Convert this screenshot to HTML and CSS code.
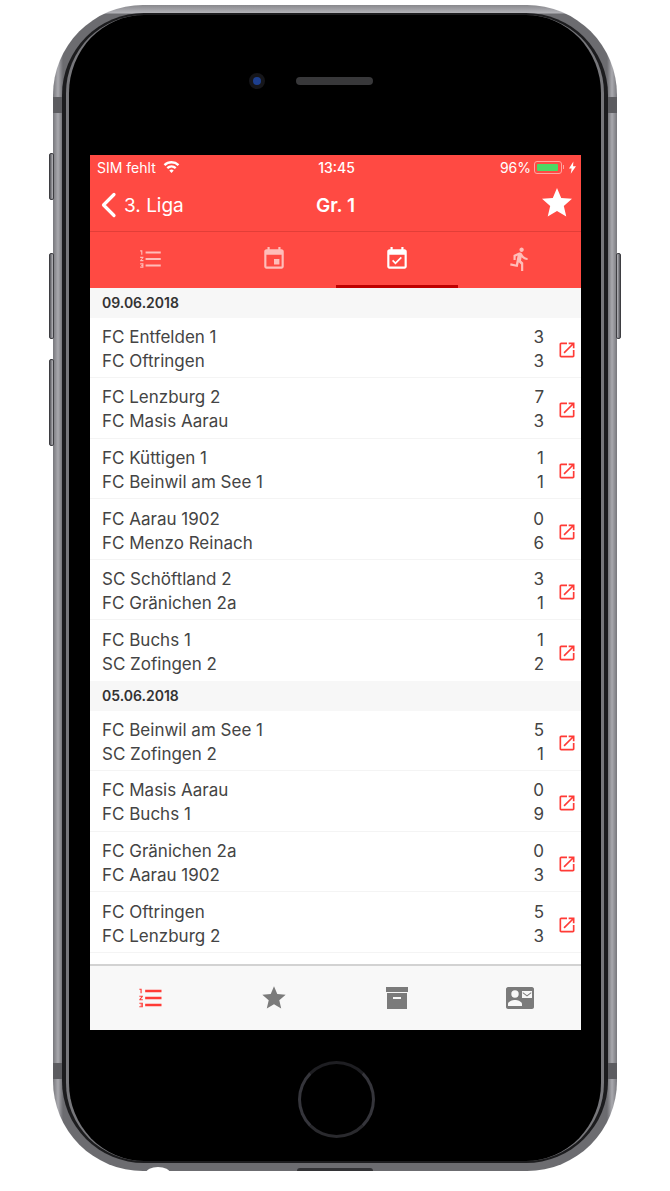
FILE: index.html
```html
<!DOCTYPE html>
<html lang="en">
<head>
  <meta charset="UTF-8" />
  <meta name="viewport" content="width=device-width, initial-scale=1" />
  <title>3. Liga Gr. 1</title>
  <link rel="stylesheet" href="styles.css">
</head>
<body>

  <svg class="defs" aria-hidden="true">
    <symbol id="ic-open" viewBox="0 0 24 24"><path d="M19 19H5V5h7V3H5c-1.11 0-2 .9-2 2v14c0 1.1.89 2 2 2h14c1.1 0 2-.9 2-2v-7h-2v7zM14 3v2h3.59l-9.83 9.83 1.41 1.41L19 6.41V10h2V3h-7z"/></symbol>
    <symbol id="ic-list" viewBox="0 0 24 24"><path d="M2 17h2v.5H3v1h1v.5H2v1h3v-4H2v1zm1-9h1V4H2v1h1v3zm-1 3h1.8L2 13.1v.9h3v-1H3.2L5 10.9V10H2v1zm5-6v2h14V5H7zm0 14h14v-2H7v2zm0-6h14v-2H7v2z"/></symbol>
    <symbol id="ic-star" viewBox="0 0 24 24"><path d="M12 17.27L18.18 21l-1.64-7.03L22 9.24l-7.19-.61L12 2 9.19 8.63 2 9.24l5.46 4.73L5.82 21z"/></symbol>
  </svg>

  <div class="phone">
    <span class="side-btn mute"></span>
    <span class="side-btn vol-up"></span>
    <span class="side-btn vol-down"></span>
    <span class="side-btn power"></span>
    <span class="band band-tl"></span>
    <span class="band band-tr"></span>
    <span class="band band-bl"></span>
    <span class="band band-br"></span>
    <span class="port-hole"></span>
    <span class="port-speaker"></span>

    <div class="rim">
      <div class="face">
        <div class="bezel-top">
          <span class="camera"></span>
          <span class="speaker"></span>
        </div>

        <main class="screen">
          <header class="app-head">
            <div class="status">
              <div class="status-left">
                <span>SIM fehlt</span>
                <svg class="wifi" viewBox="0 0 18 13"><path d="M9 13L6.6 10.2a3.6 3.6 0 0 1 4.8 0zM5.3 8.7L3.6 6.8a8 8 0 0 1 10.8 0L12.7 8.7a5.6 5.6 0 0 0-7.4 0zM2.3 5.3L.5 3.4a12.4 12.4 0 0 1 17 0L15.7 5.3a10 10 0 0 0-13.4 0z"/></svg>
              </div>
              <strong class="clock">13:45</strong>
              <div class="status-right">
                <span>96%</span>
                <span class="battery"><span class="battery-level"></span></span>
                <span class="battery-tip"></span>
                <svg class="bolt" viewBox="0 0 8 14"><path d="M5 0L0 8h3l-1 6 6-8.5H4.6z"/></svg>
              </div>
            </div>

            <nav class="navbar">
              <a class="back">
                <svg class="chevron" viewBox="0 0 16 26"><path d="M13.5 2.5L3 13l10.5 10.5"/></svg>
                <span>3. Liga</span>
              </a>
              <strong class="nav-title">Gr. 1</strong>
              <svg class="nav-star"><use href="#ic-star"/></svg>
            </nav>

            <div class="tabs">
              <div class="tab"><svg class="tab-icon"><use href="#ic-list"/></svg></div>
              <div class="tab"><svg class="tab-icon" viewBox="0 0 24 24"><path d="M17 12h-5v5h5v-5zM16 1v2H8V1H6v2H5c-1.11 0-1.99.9-1.99 2L3 19c0 1.1.89 2 2 2h14c1.1 0 2-.9 2-2V5c0-1.1-.9-2-2-2h-1V1h-2zm3 18H5V8h14v11z"/></svg></div>
              <div class="tab active"><svg class="tab-icon" viewBox="0 0 24 24"><path d="M16.53 11.06L15.47 10l-4.88 4.88-2.12-2.12-1.06 1.06L10.59 17l5.94-5.94zM19 3h-1V1h-2v2H8V1H6v2H5c-1.11 0-1.99.9-1.99 2L3 19c0 1.1.89 2 2 2h14c1.1 0 2-.9 2-2V5c0-1.1-.9-2-2-2zm0 16H5V8h14v11z"/></svg></div>
              <div class="tab"><svg class="tab-icon" viewBox="0 0 24 24"><path d="M13.49 5.48c1.1 0 2-.9 2-2s-.9-2-2-2-2 .9-2 2 .9 2 2 2zm-3.6 13.9l1-4.4 2.1 2v6h2v-7.5l-2.1-2 .6-3c1.3 1.5 3.3 2.5 5.5 2.5v-2c-1.9 0-3.5-1-4.3-2.4l-1-1.6c-.4-.6-1-1-1.7-1-.3 0-.5.1-.8.1l-5.2 2.2v4.7h2v-3.4l1.8-.7-1.6 8.1-4.9-1-.4 2 7 1.4z"/></svg></div>
            </div>
          </header>

          <section class="results">
            <h2 class="date">09.06.2018</h2>
            <div class="match"><div class="teams"><span>FC Entfelden 1</span><span>FC Oftringen</span></div><div class="score"><span>3</span><span>3</span></div><svg class="open"><use href="#ic-open"/></svg></div>
            <div class="match"><div class="teams"><span>FC Lenzburg 2</span><span>FC Masis Aarau</span></div><div class="score"><span>7</span><span>3</span></div><svg class="open"><use href="#ic-open"/></svg></div>
            <div class="match"><div class="teams"><span>FC Küttigen 1</span><span>FC Beinwil am See 1</span></div><div class="score"><span>1</span><span>1</span></div><svg class="open"><use href="#ic-open"/></svg></div>
            <div class="match"><div class="teams"><span>FC Aarau 1902</span><span>FC Menzo Reinach</span></div><div class="score"><span>0</span><span>6</span></div><svg class="open"><use href="#ic-open"/></svg></div>
            <div class="match"><div class="teams"><span>SC Schöftland 2</span><span>FC Gränichen 2a</span></div><div class="score"><span>3</span><span>1</span></div><svg class="open"><use href="#ic-open"/></svg></div>
            <div class="match no-line"><div class="teams"><span>FC Buchs 1</span><span>SC Zofingen 2</span></div><div class="score"><span>1</span><span>2</span></div><svg class="open"><use href="#ic-open"/></svg></div>

            <h2 class="date">05.06.2018</h2>
            <div class="match"><div class="teams"><span>FC Beinwil am See 1</span><span>SC Zofingen 2</span></div><div class="score"><span>5</span><span>1</span></div><svg class="open"><use href="#ic-open"/></svg></div>
            <div class="match"><div class="teams"><span>FC Masis Aarau</span><span>FC Buchs 1</span></div><div class="score"><span>0</span><span>9</span></div><svg class="open"><use href="#ic-open"/></svg></div>
            <div class="match"><div class="teams"><span>FC Gränichen 2a</span><span>FC Aarau 1902</span></div><div class="score"><span>0</span><span>3</span></div><svg class="open"><use href="#ic-open"/></svg></div>
            <div class="match"><div class="teams"><span>FC Oftringen</span><span>FC Lenzburg 2</span></div><div class="score"><span>5</span><span>3</span></div><svg class="open"><use href="#ic-open"/></svg></div>
          </section>

          <footer class="bottom-bar">
            <div class="bottom-item active"><svg class="bottom-icon"><use href="#ic-list"/></svg></div>
            <div class="bottom-item"><svg class="bottom-icon"><use href="#ic-star"/></svg></div>
            <div class="bottom-item"><svg class="bottom-icon box" viewBox="0 0 22 22"><path fill-rule="evenodd" d="M0 0h22v5H0zM1 6h20v16H1zM7 10v2h8v-2z"/></svg></div>
            <div class="bottom-item"><svg class="bottom-icon card" viewBox="0 0 28 22"><path fill-rule="evenodd" d="M2 0h24c1 0 2 1 2 2v18c0 1-1 2-2 2H2c-1 0-2-1-2-2V2C0 1 1 0 2 0zM9 3.3a3.7 3.7 0 1 0 0 7.4 3.7 3.7 0 0 0 0-7.4zM2 19h14v-2c0-2.5-4.5-4-7-4s-7 1.5-7 4zM16 4v7h10V4zM17 5.2l4 3 4-3 .5.8-4.5 3.4L16.5 6z"/></svg></div>
          </footer>
        </main>

        <div class="bezel-bottom">
          <span class="home-btn"></span>
        </div>
      </div>
    </div>
  </div>

</body>
</html>
```

FILE: styles.css
```css
/* Page */
body {
  margin: 0;
  width: 670px;
  height: 1191px;
  overflow: hidden;
  background: #fff;
  font-family: Inter, Roboto, 'Liberation Sans', sans-serif;
}

.defs {
  display: none;
}

/* Phone body */
.phone {
  position: relative;
  width: 564px;
  height: 1166px;
  margin: 5px 0 0 53px;
  padding: 8px 9px;
  box-sizing: border-box;
  border-radius: 90px;
  background:
    linear-gradient(180deg, #88888c 0, #b4b4b9 8px, transparent 9px),
    linear-gradient(90deg, #77777c 0, #a9a9ae 5px, #6c6c70 10px, #6c6c70 554px, #a9a9ae 559px, #77777c 100%);
}

.rim {
  height: 100%;
  padding: 2px 4px;
  box-sizing: border-box;
  border-radius: 82px;
  background: #1c1c1e;
}

.face {
  height: 100%;
  box-sizing: border-box;
  padding: 0 20px 0 21px;
  display: flex;
  flex-direction: column;
  background: #000;
  border-radius: 78px;
  border-left: 3px solid #77777b;
  border-right: 3px solid #77777b;
}

/* Outside hardware, lies over the body edge */
.side-btn {
  position: absolute;
  width: 5px;
  background: linear-gradient(90deg, #55555a, #b9b9be);
  border: 1px solid #3e3e42;
  box-sizing: border-box;
  border-radius: 2px;
}

.mute { left: -4px; top: 148px; height: 47px; }
.vol-up { left: -4px; top: 248px; height: 86px; }
.vol-down { left: -4px; top: 354px; height: 87px; }
.power { right: -4px; top: 248px; height: 86px; transform: scaleX(-1); }

.band {
  position: absolute;
  width: 9px;
  height: 16px;
  background: #5c5c60;
}

.band-tl { left: 0; top: 92px; }
.band-tr { right: 0; top: 92px; }
.band-bl { left: 0; top: 1058px; }
.band-br { right: 0; top: 1058px; }

.port-hole {
  position: absolute;
  left: 93px;
  bottom: -8px;
  width: 24px;
  height: 12px;
  border-radius: 50%;
  background: #fff;
}

.port-speaker {
  position: absolute;
  left: 244px;
  bottom: 0;
  width: 76px;
  height: 3px;
  border-radius: 3px 3px 0 0;
  background: #333336;
}

.bezel-top {
  flex: none;
  height: 140px;
  padding: 0 0 8px 159px;
  box-sizing: border-box;
  display: flex;
  align-items: center;
  gap: 31px;
}

.camera {
  width: 8px;
  height: 8px;
  border-radius: 50%;
  background: #1d3f8f;
  border: 4px solid #16161a;
}

.speaker {
  width: 77px;
  height: 8px;
  border-radius: 4px;
  background: #38383a;
}

.bezel-bottom {
  flex: 1;
  padding: 8px 0 0 2px;
  display: flex;
  align-items: center;
  justify-content: center;
}

.home-btn {
  width: 71px;
  height: 71px;
  border-radius: 50%;
  border: 3px solid;
  border-color: #1e1e22 #35353b #2a2a2e #35353b;
}

/* Screen */
.screen {
  flex: none;
  height: 875px;
  display: flex;
  flex-direction: column;
  background: #fff;
  overflow: hidden;
}

.app-head {
  background: #ff4a43;
  color: #fff;
}

.status {
  height: 24px;
  padding: 0 5px 0 7px;
  display: grid;
  grid-template-columns: 1fr auto 1fr;
  align-items: center;
  font-size: 14px;
}

.status-left {
  display: flex;
  align-items: center;
  gap: 7px;
}

.clock {
  font-size: 14px;
  font-weight: 500;
}

.status-right {
  display: flex;
  align-items: center;
  justify-content: flex-end;
}

.wifi {
  width: 17px;
  height: 12px;
  fill: #fff;
}

.battery {
  width: 28px;
  height: 13px;
  margin-left: 3px;
  padding: 2px;
  box-sizing: border-box;
  border: 1px solid #ffa5a1;
  border-radius: 3px;
  display: block;
}

.battery-level {
  display: block;
  width: 96%;
  height: 100%;
  border-radius: 1px;
  background: #4cd964;
}

.battery-tip {
  width: 1px;
  height: 4px;
  margin: 0 5px 0 1px;
  background: #ffa5a1;
}

.bolt {
  width: 7px;
  height: 13px;
  fill: #fff;
}

.navbar {
  height: 52px;
  padding: 0 10px;
  display: grid;
  grid-template-columns: 1fr auto 1fr;
  align-items: center;
  border-bottom: 1px solid #e23e38;
}

.back {
  display: flex;
  align-items: center;
  gap: 7px;
  font-size: 19px;
}

.chevron {
  width: 17px;
  height: 26px;
  fill: none;
  stroke: #fff;
  stroke-width: 3.2;
  stroke-linecap: round;
  stroke-linejoin: round;
}

.nav-title {
  font-size: 19px;
  font-weight: 600;
}

.nav-star {
  justify-self: end;
  width: 36px;
  height: 36px;
  fill: #fff;
  margin-top: -4px;
  margin-right: -4px;
}

.tabs {
  height: 56px;
  display: grid;
  grid-template-columns: repeat(4, 1fr);
}

.tab {
  display: flex;
  align-items: center;
  justify-content: center;
  box-sizing: border-box;
  border-bottom: 3px solid transparent;
}

.tab.active {
  border-bottom-color: #bf0000;
}

.tab-icon {
  width: 26px;
  height: 26px;
  fill: #ffbdb9;
}

.tab.active .tab-icon {
  fill: #fff;
}

/* Results list */
.results {
  flex: 1;
  overflow: hidden;
}

.date {
  margin: 0;
  height: 29.5px;
  padding: 0 12px 1px;
  box-sizing: border-box;
  display: flex;
  align-items: center;
  background: #f7f7f7;
  color: #333;
  font-size: 14px;
  font-weight: 600;
}

.match {
  height: 60.6px;
  padding: 3px 4px 0 12px;
  box-sizing: border-box;
  display: flex;
  align-items: center;
  border-bottom: 1px solid #f4f4f4;
  color: #444;
  font-size: 17px;
  line-height: 24px;
}

.no-line {
  border-bottom: none;
}

.teams,
.score {
  display: flex;
  flex-direction: column;
}

.teams {
  flex: 1;
}

.score {
  text-align: right;
}

.open {
  width: 20px;
  height: 20px;
  margin-left: 13px;
  margin-top: 2px;
  fill: #ff3b36;
}

/* Bottom bar */
.bottom-bar {
  flex: none;
  height: 66px;
  box-sizing: border-box;
  display: grid;
  grid-template-columns: repeat(4, 1fr);
  background: #f8f8f8;
  border-top: 2px solid #d2d2d2;
}

.bottom-item {
  display: flex;
  align-items: center;
  justify-content: center;
}

.bottom-icon {
  width: 28px;
  height: 28px;
  fill: #7b7b7b;
}

.bottom-icon.box {
  width: 22px;
  height: 22px;
}

.bottom-icon.card {
  width: 28px;
  height: 22px;
}

.bottom-item.active .bottom-icon {
  fill: #ff3b36;
}
```
